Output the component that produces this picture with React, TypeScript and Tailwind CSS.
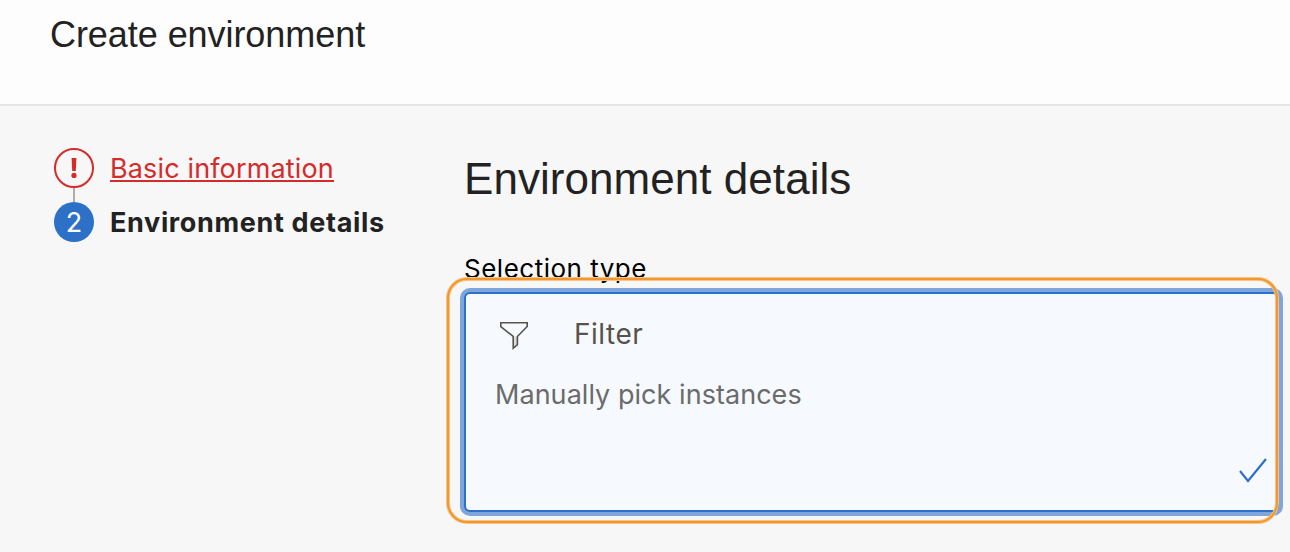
export default function App() {
  return (
    <div className="flex h-[552px] w-[1290px] flex-col overflow-hidden bg-[#f7f7f7] font-['Inter',sans-serif] text-[27px] leading-[36px] text-[#222222]">
      <header className="h-[106px] shrink-0 border-b-2 border-[#e5e5e5] bg-[#fdfdfd] pt-[14px] pl-[50px]">
        <h1 className="w-max font-['Liberation_Sans',sans-serif] text-[36px] leading-[42px] tracking-[-0.06px]">Create environment</h1>
      </header>
      <div className="flex flex-1">
        <nav className="w-[464px] shrink-0 pt-[42px] pl-[54px]">
          <div className="flex h-10 items-center gap-4">
            <span className="flex size-10 items-center justify-center rounded-full border-2 border-[#d52b2b]">
              <svg width="8" height="22" viewBox="0 0 8 22" fill="#d52b2b">
                <path d="M1.6 1h4.8l-.6 13H2.2z" />
                <circle cx="4" cy="18.4" r="2.6" />
              </svg>
            </span>
            <a className="h-[28px] w-max border-b-2 border-[#d52b2b] leading-[30px] tracking-[0.14px] text-[#d52b2b]">Basic information</a>
          </div>
          <div className="ml-[19px] h-[14px] w-[2px] bg-[#adadad]" />
          <div className="flex h-10 items-center gap-4">
            <span className="flex size-10 items-center justify-center rounded-full bg-[#2d70c8] pt-px text-white">2</span>
            <span className="w-max pt-px font-bold tracking-[0.65px]">Environment details</span>
          </div>
        </nav>
        <main className="w-[815px] shrink-0 pt-[48px]">
          <h2 className="w-max font-['Liberation_Sans',sans-serif] text-[44px] leading-[50px] tracking-[0.05px]">Environment details</h2>
          <p className="mt-[47px] w-max text-[26px] leading-[36px] tracking-[0.5px] text-black">Selection type</p>
          <div className="relative mt-[5px] h-[220px] rounded-[6px] border-2 border-[#2d70c8] bg-[#f6faff] pt-[22px] pl-[29px] ring-4 ring-[#7ea5dc]">
            <div className="flex items-center">
              <svg className="mt-[4px] ml-[4px]" width="32" height="32" viewBox="0 0 32 32" fill="none" stroke="#57534b" strokeWidth="1.6">
                <path d="M14.2 16.5h4.2v8.2l-4.2 3.6z" fill="#dedede" stroke="none" />
                <path d="M1.8 2.8h26.4v3.7L18.4 16.5v8.2l-4.2 3.6V16.5L1.8 6.5z" />
              </svg>
              <span className="ml-[43px] text-[28px] tracking-[0.5px] text-[#57534b]">Filter</span>
            </div>
            <p className="mt-[25px] w-max tracking-[0.04px] text-[#6b6b6b]">Manually pick instances</p>
            <svg className="absolute right-[9px] bottom-[25px]" width="30" height="28" viewBox="0 0 30 28" fill="none" stroke="#2d70c8" strokeWidth="2.2">
              <path d="M2 14l8 10L28 2" />
            </svg>
            <div className="pointer-events-none absolute -top-[17px] -left-[20px] h-[247px] w-[833px] rounded-[21px] border-4 border-[#f6c486]">
              <div className="absolute -inset-[3px] rounded-[20px] border-2 border-[#f2962d]" />
            </div>
          </div>
        </main>
      </div>
    </div>
  );
}
